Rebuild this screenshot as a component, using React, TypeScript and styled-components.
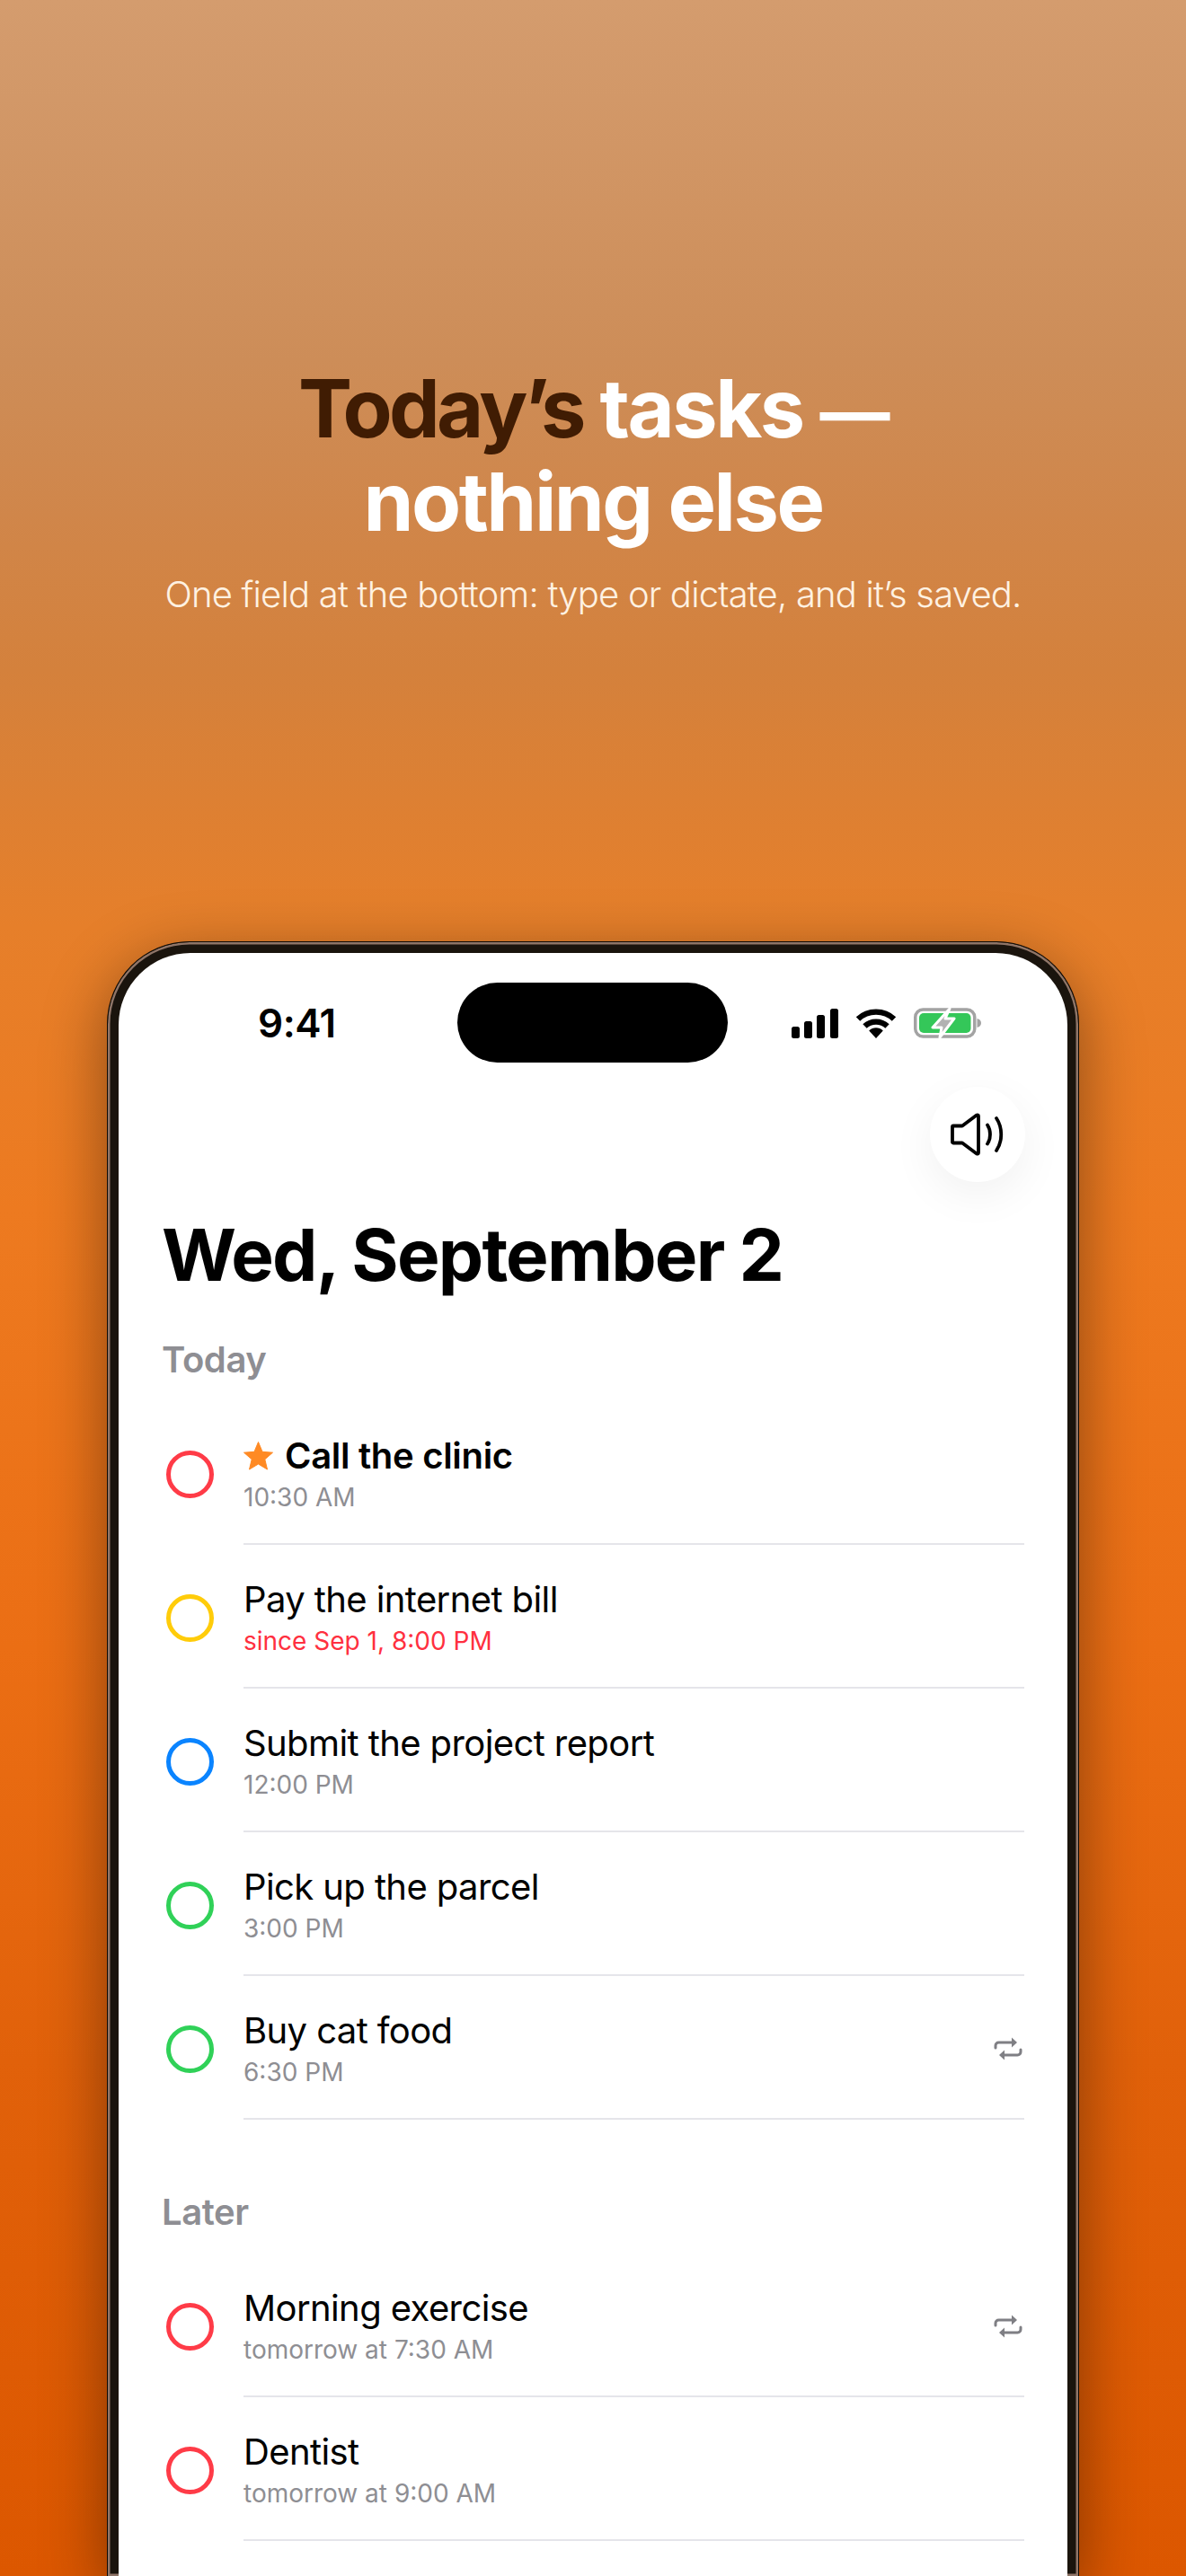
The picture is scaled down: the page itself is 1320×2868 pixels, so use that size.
import React from "react";
import styled, { createGlobalStyle } from "styled-components";

const GlobalStyle = createGlobalStyle`
  html, body {
    margin: 0;
    padding: 0;
    background: #dc5700;
  }
  * {
    box-sizing: border-box;
  }
`;

const Page = styled.div`
  width: 1320px;
  height: 2868px;
  overflow: hidden;
  display: flex;
  flex-direction: column;
  align-items: center;
  font-family: Inter, "Liberation Sans", sans-serif;
  background: linear-gradient(180deg, #d49c6e 0%, #cd8d58 14%, #d0864a 20%, #d4813c 26%, #e67f2a 36%, #ed7a20 47%, #eb6e14 64%, #e1610a 80%, #dc5700 100%);
`;

const Hero = styled.header`
  flex: none;
  height: 1048px;
  padding-top: 403px;
  text-align: center;
`;

const Heading = styled.h1`
  margin: 0;
  font-size: 90px;
  line-height: 104px;
  font-weight: 700;
  letter-spacing: -2.5px;
  color: #fff;
`;

const DarkWords = styled.span`
  color: #401c03;
  letter-spacing: -3.6px;
`;

const Dash = styled.span`
  font-size: 78px;
  line-height: 1;
`;

const Subtitle = styled.p`
  margin: 26px 0 0;
  font-size: 40px;
  line-height: 50px;
  font-weight: 300;
  letter-spacing: -0.8px;
  color: #fff2e2;
`;

const Phone = styled.div`
  width: 1082px;
  flex: none;
  height: 1820px;
  padding: 12px 12px 0;
  border-radius: 92px 92px 0 0;
  background: #1a140d;
  border: 1px solid #0d0a06;
  border-bottom: none;
  box-shadow: inset 0 0 0 2.5px #8f7568, 0 20px 70px rgba(0, 0, 0, 0.42);
`;

const Screen = styled.div`
  position: relative;
  height: 100%;
  border-radius: 80px 80px 0 0;
  background: #fff;
  overflow: hidden;
`;

const StatusBar = styled.div`
  height: 122px;
  display: flex;
  align-items: flex-start;
`;

const Clock = styled.span`
  width: 377px;
  padding: 53px 0 0 155px;
  font-size: 44px;
  line-height: 50px;
  font-weight: 600;
  color: #000;
  letter-spacing: -0.5px;
`;

const Island = styled.div`
  width: 301px;
  height: 89px;
  margin-top: 33px;
  border-radius: 45px;
  background: #000;
`;

const StatusIcons = styled.div`
  display: flex;
  align-items: center;
  gap: 19px;
  margin: 61px 0 0 71px;
`;

const SpeakerButton = styled.div`
  position: absolute;
  top: 149px;
  right: 47px;
  width: 106px;
  height: 106px;
  border-radius: 50%;
  background: #fff;
  display: flex;
  align-items: center;
  justify-content: center;
  box-shadow: 0 14px 50px rgba(0, 0, 0, 0.06);
`;

const Content = styled.main`
  padding: 166px 48px 0 48px;
`;

const DateTitle = styled.h2`
  margin: 0;
  font-size: 80px;
  line-height: 96px;
  font-weight: 700;
  letter-spacing: -1.8px;
  color: #000;
`;

const SectionLabel = styled.h3<{ $top: number }>`
  margin: ${(p) => p.$top}px 0 22px;
  height: 48px;
  font-size: 40px;
  line-height: 48px;
  font-weight: 600;
  letter-spacing: -0.4px;
  color: #8e8e93;
`;

const TaskList = styled.ul`
  list-style: none;
  margin: 0;
  padding: 0;
`;

const TaskRow = styled.li`
  display: flex;
  align-items: center;
  height: 160px;
`;

const Ring = styled.span<{ $color: string }>`
  flex: none;
  width: 53px;
  height: 53px;
  margin: 2px 33px 0 5px;
  border-radius: 50%;
  border: 5px solid ${(p) => p.$color};
`;

const TaskBody = styled.div`
  flex: 1;
  height: 100%;
  display: flex;
  align-items: center;
  justify-content: space-between;
  border-bottom: 2px solid #e5e5ea;
`;

const TaskText = styled.div`
  display: flex;
  flex-direction: column;
  padding-top: 4px;
`;

const TaskTitle = styled.span<{ $bold?: boolean }>`
  display: flex;
  align-items: center;
  gap: 13px;
  font-size: 40px;
  line-height: 48px;
  font-weight: ${(p) => (p.$bold ? 600 : 400)};
  letter-spacing: ${(p) => (p.$bold ? "-0.3px" : "-0.6px")};
  color: #000;
`;

const TaskMeta = styled.span<{ $late?: boolean }>`
  margin-top: 3px;
  font-size: 28px;
  line-height: 38px;
  color: ${(p) => (p.$late ? "#ff3040" : "#8e8e93")};
`;

const RepeatSlot = styled.span`
  display: flex;
  margin: 4px 2px 0 0;
`;

const SignalIcon = () => (
  <svg width="52" height="33" viewBox="0 0 52 33" fill="#000">
    <rect x="0" y="20" width="9" height="13" rx="2.5" />
    <rect x="14" y="14" width="9" height="19" rx="2.5" />
    <rect x="28" y="7" width="9" height="26" rx="2.5" />
    <rect x="43" y="0" width="9" height="33" rx="2.5" />
  </svg>
);

const WifiIcon = () => (
  <svg width="46" height="33" viewBox="0 0 46 33" fill="none" stroke="#000" strokeWidth="6.4">
    <path d="M3 11.5C14 1 32 1 43 11.5" />
    <path d="M10.5 19.5C17.5 13 28.500 13 35.500 19.500" />
    <path d="M23 33l-7.800-8.500C19.500 20.300 26.500 20.300 30.800 24.500Z" fill="#000" stroke="none" />
  </svg>
);

const BatteryIcon = () => (
  <svg width="75" height="34" viewBox="0 0 75 34">
    <rect x="1.750" y="2" width="66" height="30" rx="8.500" fill="none" stroke="#a3a3a3" strokeWidth="3.500" />
    <rect x="6" y="6" width="57.500" height="22" rx="5" fill="#34c759" />
    <path d="M70.500 12c2.800.8 4.500 2.500 4.500 5s-1.700 4.200-4.500 5Z" fill="#a3a3a3" />
    <path
      d="M40 1L21 22H31L29 33L45 12H35Z"
      fill="#b2b2b2"
      stroke="#fff"
      strokeWidth="3"
      strokeLinejoin="round"
    />
  </svg>
);

const SpeakerIcon = () => (
  <svg width="60" height="48" viewBox="0 0 60 48" fill="none" stroke="#000" strokeLinecap="round" strokeLinejoin="round">
    <path d="M3 14.500H13L29 2.500C29.800 2 31 2.500 31 3.500V44.500C31 45.500 29.800 46 29 45.500L13 33.500H3C2.200 33.500 2 33 2 32.500V15.500C2 15 2.200 14.500 3 14.500Z" strokeWidth="3.800" />
    <path d="M41 13.500C45 19.500 45 28.500 41 34.500" strokeWidth="3.800" />
    <path d="M51 6C58 16.500 58 31.500 51 42" strokeWidth="3.800" />
  </svg>
);

const StarIcon = () => (
  <svg width="33" height="32" viewBox="0 0 33 32" fill="#ff8a24">
    <path d="M16.500 0.500L21 11.300L32.500 12.200L23.800 19.800L26.500 31L16.500 25L6.500 31L9.200 19.800L0.500 12.200L12 11.300Z" stroke="#ff8a24" strokeWidth="1" strokeLinejoin="round" />
  </svg>
);

const RepeatIcon = () => (
  <svg width="32" height="26" viewBox="0 0 32 26" fill="none" stroke="#7f7f84" strokeWidth="3" strokeLinecap="round">
    <path d="M2 12V9.500C2 7.500 3.500 6 5.500 6H20" />
    <path d="M30 14V16.500C30 18.500 28.500 20 26.500 20H12" />
    <path d="M20 0.500L26 6L20 11.500Z" fill="#7f7f84" stroke="none" />
    <path d="M12 14.500L6 20L12 25.500Z" fill="#7f7f84" stroke="none" />
  </svg>
);

interface ITask {
  title: string;
  meta: string;
  color: string;
  late?: boolean;
  starred?: boolean;
  repeats?: boolean;
}

const today: ITask[] = [
  { title: "Call the clinic", meta: "10:30 AM", color: "#ff3b47", starred: true },
  { title: "Pay the internet bill", meta: "since Sep 1, 8:00 PM", color: "#ffcc0a", late: true },
  { title: "Submit the project report", meta: "12:00 PM", color: "#0a84ff" },
  { title: "Pick up the parcel", meta: "3:00 PM", color: "#30d158" },
  { title: "Buy cat food", meta: "6:30 PM", color: "#30d158", repeats: true },
];

const later: ITask[] = [
  { title: "Morning exercise", meta: "tomorrow at 7:30 AM", color: "#ff3b47", repeats: true },
  { title: "Dentist", meta: "tomorrow at 9:00 AM", color: "#ff3b47" },
];

const Task = ({ task }: { task: ITask }) => (
  <TaskRow>
    <Ring $color={task.color} />
    <TaskBody>
      <TaskText>
        <TaskTitle $bold={task.starred}>
          {task.starred && <StarIcon />}
          {task.title}
        </TaskTitle>
        <TaskMeta $late={task.late}>{task.meta}</TaskMeta>
      </TaskText>
      {task.repeats && (
        <RepeatSlot>
          <RepeatIcon />
        </RepeatSlot>
      )}
    </TaskBody>
  </TaskRow>
);

const App = () => (
  <Page>
    <GlobalStyle />
    <Hero>
      <Heading>
        <DarkWords>Today’s</DarkWords> tasks <Dash>—</Dash>
        <br />
        nothing else
      </Heading>
      <Subtitle>One field at the bottom: type or dictate, and it’s saved.</Subtitle>
    </Hero>
    <Phone>
      <Screen>
        <StatusBar>
          <Clock>9:41</Clock>
          <Island />
          <StatusIcons>
            <SignalIcon />
            <WifiIcon />
            <BatteryIcon />
          </StatusIcons>
        </StatusBar>
        <SpeakerButton>
          <SpeakerIcon />
        </SpeakerButton>
        <Content>
          <DateTitle>Wed, September 2</DateTitle>
          <SectionLabel $top={45}>Today</SectionLabel>
          <TaskList>
            {today.map((task) => (
              <Task key={task.title} task={task} />
            ))}
          </TaskList>
          <SectionLabel $top={79}>Later</SectionLabel>
          <TaskList>
            {later.map((task) => (
              <Task key={task.title} task={task} />
            ))}
          </TaskList>
        </Content>
      </Screen>
    </Phone>
  </Page>
);

export default App;
